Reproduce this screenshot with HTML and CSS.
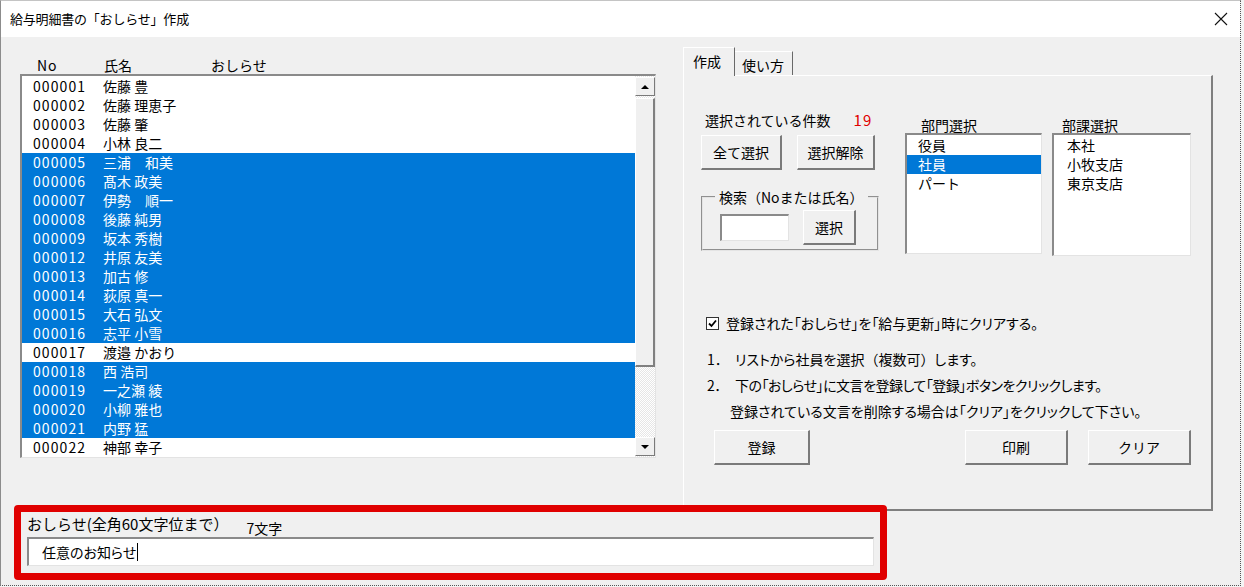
FILE: index.html
```html
<!DOCTYPE html>
<html lang="ja">
<head>
  <meta charset="UTF-8">
  <meta name="viewport" content="width=device-width, initial-scale=1.0">
  <title>給与明細書の「おしらせ」作成</title>
  <link rel="stylesheet" href="styles.css">
</head>
<body>
  <div class="window">
    <div class="titlebar">
      <span class="title">給与明細書の「おしらせ」作成</span>
      <svg class="close" width="14" height="14" viewBox="0 0 14 14">
        <path d="M1 1L13 13M13 1L1 13" stroke="#111" stroke-width="1.1" fill="none"/>
      </svg>
    </div>

    <div class="body">
      <div class="top">
        <!-- staff list -->
        <div class="left">
          <div class="list-head">
            <span class="head-no">No</span>
            <span class="head-name">氏名</span>
            <span>おしらせ</span>
          </div>
          <div class="listbox staff">
            <ul class="rows">
              <li><span class="no">000001</span><span>佐藤 豊</span></li>
              <li><span class="no">000002</span><span>佐藤 理恵子</span></li>
              <li><span class="no">000003</span><span>佐藤 肇</span></li>
              <li><span class="no">000004</span><span>小林 良二</span></li>
              <li class="selected"><span class="no">000005</span><span>三浦　和美</span></li>
              <li class="selected"><span class="no">000006</span><span>髙木 政美</span></li>
              <li class="selected"><span class="no">000007</span><span>伊勢　順一</span></li>
              <li class="selected"><span class="no">000008</span><span>後藤 純男</span></li>
              <li class="selected"><span class="no">000009</span><span>坂本 秀樹</span></li>
              <li class="selected"><span class="no">000012</span><span>井原 友美</span></li>
              <li class="selected"><span class="no">000013</span><span>加古 修</span></li>
              <li class="selected"><span class="no">000014</span><span>荻原 真一</span></li>
              <li class="selected"><span class="no">000015</span><span>大石 弘文</span></li>
              <li class="selected"><span class="no">000016</span><span>志平 小雪</span></li>
              <li><span class="no">000017</span><span>渡邉 かおり</span></li>
              <li class="selected"><span class="no">000018</span><span>西 浩司</span></li>
              <li class="selected"><span class="no">000019</span><span>一之瀬 綾</span></li>
              <li class="selected"><span class="no">000020</span><span>小柳 雅也</span></li>
              <li class="selected"><span class="no">000021</span><span>内野 猛</span></li>
              <li><span class="no">000022</span><span>神部 幸子</span></li>
            </ul>
            <div class="scrollbar">
              <div class="sb-btn"><span class="arrow-up"></span></div>
              <div class="sb-thumb"></div>
              <div class="sb-track"></div>
              <div class="sb-btn"><span class="arrow-down"></span></div>
            </div>
          </div>
        </div>

        <!-- tab panel -->
        <div class="right">
          <div class="tabs">
            <div class="tab active">作成</div>
            <div class="tab">使い方</div>
          </div>
          <div class="panel">
            <div class="select-row">
              <div class="col-count">
                <div class="count-label">選択されている件数<span class="count">19</span></div>
                <div class="btn-row">
                  <button class="btn btn-all">全て選択</button>
                  <button class="btn btn-clear">選択解除</button>
                </div>
                <fieldset class="search">
                  <legend>検索（Noまたは氏名）</legend>
                  <div class="search-row">
                    <div class="text-box"></div>
                    <button class="btn btn-pick">選択</button>
                  </div>
                </fieldset>
              </div>

              <div class="col-dept">
                <div class="pick-label">部門選択</div>
                <ul class="listbox pick dept">
                  <li>役員</li>
                  <li class="selected">社員</li>
                  <li>パート</li>
                </ul>
              </div>

              <div class="col-sect">
                <div class="pick-label">部課選択</div>
                <ul class="listbox pick sect">
                  <li>本社</li>
                  <li>小牧支店</li>
                  <li>東京支店</li>
                </ul>
              </div>
            </div>

            <div class="check-line">
              <span class="checkbox">
                <svg width="9" height="9" viewBox="0 0 9 9"><path d="M1 4.5L3.5 7L8 1.5" stroke="#000" stroke-width="1.8" fill="none"/></svg>
              </span>
              <span class="palt">登録された「おしらせ」を「給与更新」時にクリアする。</span>
            </div>

            <div class="howto">
              <p><span class="num">1．</span><span class="palt">リストから社員を選択</span>（複数可）<span class="palt">します。</span></p>
              <p class="tight"><span class="num">2．</span><span class="palt">下の「おしらせ」に文言を登録して「登録」ボタンをクリックします。</span></p>
              <p class="indent"><span class="palt">登録されている文言を削除する場合は「クリア」をクリックして下さい。</span></p>
            </div>

            <div class="action-row">
              <button class="btn btn-save">登録</button>
              <button class="btn btn-print">印刷</button>
              <button class="btn btn-reset">クリア</button>
            </div>
          </div>
        </div>
      </div>

      <!-- notice input, framed in red -->
      <div class="notice">
        <div class="notice-head">
          <span>おしらせ(全角60文字位まで）</span>
          <span class="char-count">7文字</span>
        </div>
        <div class="notice-input"><span class="palt">任意のお知らせ</span><span class="caret"></span></div>
      </div>
    </div>
  </div>
</body>
</html>
```

FILE: styles.css
```css
html {
  background-color: #f4f4f4;
}
body {
  margin: 0;
  font-family: "Noto Sans CJK JP", sans-serif;
  font-size: 14px;
  color: #000;
}
ul {
  list-style: none;
  margin: 0;
  padding: 0;
}
p {
  margin: 0;
}
.palt {
  font-feature-settings: "palt" 1;
}

/* window frame */
.window {
  width: 1241px;
  height: 586px;
  box-sizing: border-box;
  background-color: #f0f0f0;
  border-left: 1px solid #8c8c8c;
  border-right: 1px dotted #555;
  border-bottom: 1px dotted #555;
  border-top: 1px solid #c4c4c4;
}
.titlebar {
  height: 36px;
  background-color: #fff;
  display: flex;
  align-items: center;
  justify-content: space-between;
  padding: 0 12px 0 9px;
}
.title {
  font-size: 13px;
  line-height: 18px;
  letter-spacing: -0.2px;
}
.close {
  display: block;
}

.body {
  padding: 10px 0 0 13px;
}
.top {
  display: flex;
  align-items: flex-start;
}

/* staff list */
.left {
  width: 636px;
  margin: 10px 0 0 6px;
}
.list-head {
  height: 17px;
  line-height: 17px;
  display: flex;
  padding-left: 17px;
}
.head-no {
  width: 67px;
  letter-spacing: 1px;
}
.head-name {
  width: 107px;
}
.listbox {
  background-color: #fff;
  box-sizing: border-box;
  border-style: solid;
  border-width: 2px 1px 1px 2px;
  border-color: #8a8a8a #e3e3e3 #e3e3e3 #8a8a8a;
}
.staff {
  height: 384px;
  display: flex;
}
.rows {
  flex: 1;
  padding-top: 1px;
}
.rows li {
  height: 19px;
  line-height: 19px;
  display: flex;
  padding-left: 11px;
}
.rows .no {
  width: 70px;
  letter-spacing: 1.1px;
}
.selected {
  background-color: #0078d7;
  color: #fff;
}

.scrollbar {
  width: 20px;
  display: flex;
  flex-direction: column;
  padding: 1px 0;
  background: repeating-conic-gradient(#fff 0 25%, #e6e6e6 0 50%) 0 0 / 2px 2px;
}
.sb-btn {
  height: 19px;
  box-sizing: border-box;
  background-color: #f0f0f0;
  border: 1px solid;
  border-color: #fff #7a7a7a #7a7a7a #fff;
  display: flex;
  align-items: center;
  justify-content: center;
}
.sb-thumb {
  height: 269px;
  margin-top: 2px;
  box-sizing: border-box;
  background-color: #f0f0f0;
  border-style: solid;
  border-width: 1px 2px 2px 1px;
  border-color: #fff #808080 #808080 #fff;
}
.sb-track {
  flex: 1;
}
.arrow-up {
  border-left: 4px solid transparent;
  border-right: 4px solid transparent;
  border-bottom: 4px solid #000;
}
.arrow-down {
  border-left: 4px solid transparent;
  border-right: 4px solid transparent;
  border-top: 4px solid #000;
}

/* tabs */
.right {
  width: 530px;
  margin-left: 27px;
}
.tabs {
  display: flex;
  align-items: flex-end;
  height: 28px;
}
.tab {
  height: 24px;
  box-sizing: border-box;
  width: 58px;
  padding-left: 7px;
  line-height: 26px;
  border-top: 1px solid #fff;
  border-right: 1px solid #696969;
  background-color: #f0f0f0;
}
.tab.active {
  height: 29px;
  width: 52px;
  margin-bottom: -1px;
  padding-left: 9px;
  line-height: 26px;
  border-left: 1px solid #fff;
  position: relative;
  z-index: 1;
}

.panel {
  height: 436px;
  box-sizing: border-box;
  border-style: solid;
  border-width: 1px 2px 2px 1px;
  border-color: #fff #7f7f7f #7f7f7f #fff;
  padding: 35px 0 0 17px;
}
.select-row {
  display: flex;
  align-items: flex-start;
}
.col-count {
  width: 178px;
}
.count-label {
  line-height: 18px;
  padding-left: 4px;
}
.count {
  margin-left: 23px;
  color: #e00000;
  letter-spacing: 1px;
  font-size: 15px;
}
.btn-row {
  display: flex;
  margin-top: 6px;
}

.btn {
  font-family: "Noto Sans CJK JP", sans-serif;
  font-size: 14px;
  color: #000;
  height: 35px;
  padding: 0;
  background-color: #f0f0f0;
  border-style: solid;
  border-width: 1px 2px 2px 1px;
  border-color: #fff #7a7a7a #7a7a7a #fff;
}
.btn-all {
  width: 81px;
}
.btn-clear {
  width: 78px;
  margin-left: 15px;
}
.btn-pick {
  width: 53px;
  margin-left: 14px;
}

.search {
  margin: 18px 0 0;
  padding: 4px 0 4px 12px;
  border: 2px groove #e4e4e4;
  width: 178px;
  box-sizing: border-box;
}
.search legend {
  padding: 0 4px;
  line-height: 18px;
}
.search-row {
  display: flex;
  align-items: center;
}
.text-box {
  width: 69px;
  height: 27px;
  margin-left: 5px;
  box-sizing: border-box;
  background-color: #fff;
  border-style: solid;
  border-width: 2px 1px 1px 2px;
  border-color: #8a8a8a #e3e3e3 #e3e3e3 #8a8a8a;
}

.col-dept {
  width: 137px;
  margin: 6px 0 0 26px;
}
.col-sect {
  width: 139px;
  margin: 6px 0 0 10px;
}
.pick-label {
  line-height: 16px;
  height: 16px;
  padding-left: 16px;
}
.col-sect .pick-label {
  padding-left: 10px;
}
.pick {
  padding-top: 1px;
}
.pick li {
  height: 19px;
  line-height: 19px;
  padding-left: 11px;
}
.dept {
  height: 121px;
}
.sect {
  height: 123px;
}
.sect li {
  padding-left: 13px;
}

.check-line {
  display: flex;
  align-items: center;
  margin-top: 58px;
  padding-left: 5px;
  line-height: 18px;
}
.checkbox {
  width: 13px;
  height: 13px;
  box-sizing: border-box;
  border: 1px solid #333;
  background-color: #fff;
  display: flex;
  align-items: center;
  justify-content: center;
  margin-right: 7px;
}
.checkbox svg {
  display: block;
}

.howto {
  margin-top: 14px;
  padding-left: 6px;
  line-height: 26px;
}
.num {
  display: inline-block;
  width: 28px;
}
.howto .tight {
  letter-spacing: -0.5px;
}
.howto .indent {
  padding-left: 23px;
}

.action-row {
  display: flex;
  margin-top: 6px;
}
.btn-save {
  width: 96px;
  margin-left: 13px;
}
.btn-print {
  width: 103px;
  margin-left: 155px;
}
.btn-reset {
  width: 103px;
  margin-left: 20px;
}

/* notice area with the red frame */
.notice {
  width: 873px;
  box-sizing: border-box;
  margin-top: -6px;
  border: 7px solid #e00000;
  border-radius: 4px;
  padding: 3px 6px 7px;
  background-color: #f0f0f0;
  position: relative;
  z-index: 2;
}
.notice-head {
  display: flex;
  align-items: flex-start;
  font-size: 15px;
  line-height: 18px;
}
.char-count {
  margin-left: 18px;
  padding-top: 4px;
  font-size: 14px;
}
.notice-input {
  height: 29px;
  box-sizing: border-box;
  background-color: #fff;
  border-style: solid;
  border-width: 2px 1px 1px 2px;
  border-color: #8a8a8a #e3e3e3 #e3e3e3 #8a8a8a;
  padding-left: 13px;
  line-height: 26px;
  display: flex;
  align-items: center;
}
.caret {
  display: inline-block;
  width: 0;
  height: 18px;
  margin-left: 1px;
  border-left: 1px solid #000;
}
```
